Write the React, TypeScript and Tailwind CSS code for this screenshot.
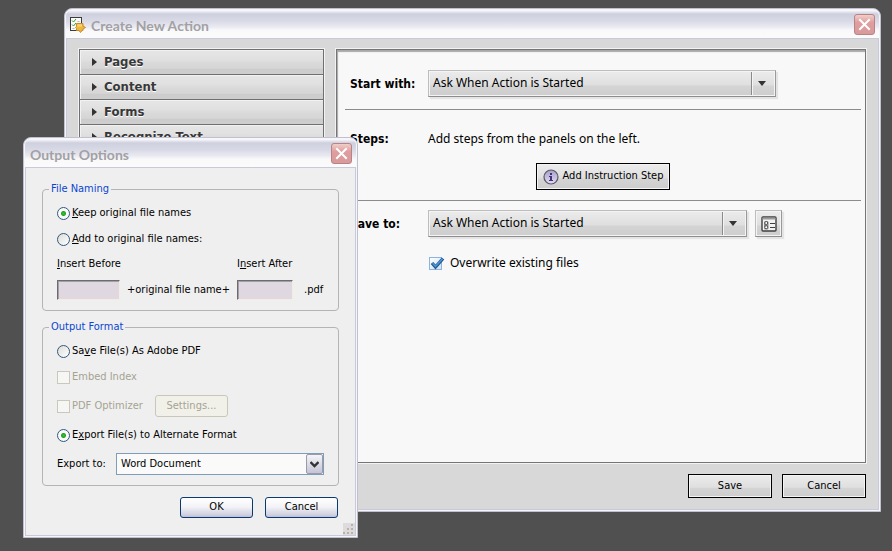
import React from 'react';

const panels = ['Pages', 'Content', 'Forms', 'Recognize Text'];

const glossy = 'bg-[linear-gradient(180deg,#ececec_0%,#e5e5e5_30%,#dfdfdf_56%,#d4d4d4_60%,#cdcdcd_100%)]';
const panelShade = 'bg-[linear-gradient(180deg,#e6e6e6_0%,#e0e0e0_40%,#d9d9d9_55%,#d6d6d6_76%,#cccccc_80%,#cecece_100%)]';

const condensed = "font-[family-name:'DejaVu_Sans_Condensed',sans-serif]";

const ActionIcon = () => (
  <svg width="16" height="16" viewBox="0 0 16 16" aria-hidden="true">
    <rect x="0.5" y="0.5" width="11" height="13" fill="#fafafa" stroke="#3c3c3c" />
    <path d="M2 3.500l1.500 1.500L6 2M2 7.500l1.500 1.500L6 6" fill="none" stroke="#3f9a3a" />
    <path d="M7.500 4.500h2M2.500 11.500h2" stroke="#b5b5b5" />
    <path d="M6.500 6.500h6.500v2.500l2.500 1.500-2.500 1.500v1.500h-1l-1.500 2-1.500-2h-2.500v-2l-1-1 1-1z" fill="#eeb73c" stroke="#c98a2a" />
    <path d="M7.500 8h4.500M7.500 9h4.500" stroke="#f8dc8e" />
  </svg>
);

const InfoIcon = () => (
  <svg width="16" height="16" viewBox="0 0 16 16" aria-hidden="true">
    <defs>
      <linearGradient id="info" x1="0" y1="0" x2="0" y2="1">
        <stop offset="0" stopColor="#a79fca" />
        <stop offset="1" stopColor="#e2def2" />
      </linearGradient>
    </defs>
    <circle cx="8" cy="8" r="7" fill="url(#info)" stroke="#5b5866" strokeWidth="1.200" />
    <path d="M7 4h2v2H7zM6 7h3v4h1v1H6v-1h1V8H6z" fill="#4a2f7c" />
  </svg>
);

const OptionsIcon = () => (
  <svg width="16" height="16" viewBox="0 0 16 16" aria-hidden="true">
    <rect x="1" y="1" width="14" height="14" rx="1" fill="#f2f2f2" stroke="#3f3f3f" strokeWidth="1.400" />
    <path d="M1.500 2.500h13" stroke="#9a9a9a" strokeWidth="2" />
    <rect x="3" y="5" width="4.500" height="8.500" rx="1.500" fill="#8a8a8a" />
    <circle cx="5.200" cy="7" r="1.500" fill="#fff" stroke="#555" />
    <circle cx="5.200" cy="11.200" r="1.500" fill="#fff" stroke="#555" />
    <path d="M9 7.500h5M9 11.500h5" stroke="#3f3f3f" />
  </svg>
);

const TitleBar = ({ title, icon }: { title: string; icon?: React.ReactNode }) => (
  <div className="flex h-7 items-center justify-between bg-[linear-gradient(180deg,#fcfcfe_0%,#cfd0df_14%,#d9dae6_40%,#e9eaf1_60%,#f9f9fb_72%,#fbfbfb_100%)] px-1 pt-px">
    <div className="flex items-center gap-1">
      {icon}
      <h1 className="pt-0.5 pl-px font-[family-name:'Lato',sans-serif] text-sm font-bold text-[#a2a1a4]">{title}</h1>
    </div>
    <button
      aria-label="Close"
      className="flex size-[21px] items-center justify-center rounded-[3px] border border-[#b98285] bg-[linear-gradient(180deg,#f0cfc8,#df9d9f_40%,#d99a9c)]"
    >
      <svg width="13" height="13" viewBox="0 0 13 13" aria-hidden="true">
        <path d="M2 2l9 9M11 2l-9 9" stroke="#fff" strokeWidth="2" strokeLinecap="square" />
      </svg>
    </button>
  </div>
);

const ActionSelect = ({ id, className }: { id: string; className: string }) => (
  <div className={`relative ${className}`}>
    <select
      id={id}
      className={`block h-[27px] w-full appearance-none border border-[#bdbdbd] border-r-[#999] border-b-[#8c8c8c] pr-7 pb-[2px] pl-1 text-xs text-black shadow-[inset_0_0_0_1px_#f4f4f4,2px_2px_1px_#e4e4e4] ${glossy}`}
    >
      <option>Ask When Action is Started</option>
    </select>
    <span className="pointer-events-none absolute inset-y-[2px] right-[1px] flex w-6 items-center justify-center border-l border-[#8a8a8a] pr-1 shadow-[inset_1px_0_0_#f4f4f4]">
      <svg width="8" height="5" viewBox="0 0 8 5" aria-hidden="true">
        <path d="M0 0h8L4 5z" fill="#333" />
      </svg>
    </span>
  </div>
);

const Radio = ({ name, checked, children }: { name: string; checked?: boolean; children: React.ReactNode }) => (
  <label className="flex h-4 items-center gap-[2px]">
    <input
      type="radio"
      name={name}
      defaultChecked={checked}
      className="size-[13px] appearance-none rounded-full border border-[#31587f] bg-[linear-gradient(135deg,#dcdcd7,#fff)] checked:bg-[radial-gradient(circle,#3cc43a_0,#22a121_2px,#fafafa_3px)]"
    />
    <span>{children}</span>
  </label>
);

const DisabledCheck = ({ label }: { label: string }) => (
  <label className="flex h-4 items-center gap-[2px] text-[#a5a392]">
    <input type="checkbox" disabled className="size-[13px] appearance-none border border-[#cac8bb] bg-[#f6f6f4]" />
    <span>{label}</span>
  </label>
);

const ActionWindow = () => (
  <section className="absolute top-2 right-[11px] bottom-[39px] left-16 flex flex-col rounded-t-lg border border-[#c0c0cf] bg-[#f6f6fa] p-px">
    <div className="overflow-hidden rounded-t-md">
      <TitleBar title="Create New Action" icon={<ActionIcon />} />
    </div>
    <div className="flex min-h-0 flex-1 flex-col border border-[#c9c9dc] bg-[#d8d8d8] px-3 pt-2.5 pb-[11px]">
      <div className="flex min-h-0 flex-1 gap-3">
        <div className="w-[245px] shrink-0 border border-[#6f6f6f] shadow-[0_0_0_1px_#f2f2f2]">
          {panels.map((panel) => (
            <button
              key={panel}
              className={`flex h-[25px] w-full items-center gap-[7px] border-b border-[#6f6f6f] pl-3 text-[13px] font-bold text-[#383838] shadow-[inset_1px_1px_0_#f2f2f2] [text-shadow:0_1px_0_#fff] ${condensed} ${panelShade}`}
            >
              <svg width="5" height="8" viewBox="0 0 5 8" aria-hidden="true">
                <path d="M0 0l5 4-5 4z" fill="#333" />
              </svg>
              {panel}
            </button>
          ))}
        </div>
        <div className="min-w-0 flex-1 border border-[#757575] bg-[#f8f8f8] pr-1 pl-2 text-xs text-black shadow-[inset_1px_2px_1px_#a8a8a8,0_0_0_1px_#f2f2f2]">
          <div className="flex items-center border-b border-[#8c8c8c] pt-5 pb-3 pl-[5px]">
            <label htmlFor="start-with" className={`w-[78px] font-bold ${condensed}`}>
              Start with:
            </label>
            <ActionSelect id="start-with" className="w-[348px]" />
          </div>
          <div className="border-b border-[#8c8c8c] pt-5 pb-2.5">
            <div className="flex h-[18px] items-center pl-[5px]">
              <span className={`w-[78px] font-bold ${condensed}`}>Steps:</span>
              <span>Add steps from the panels on the left.</span>
            </div>
            <div className="mt-[15px] flex justify-center">
              <button
                className={`flex h-[27px] items-center gap-1 border border-black px-[6px] text-[11px] shadow-[inset_0_0_0_1px_#f4f4f4] ${condensed} ${glossy}`}
              >
                <InfoIcon />
                Add Instruction Step
              </button>
            </div>
          </div>
          <div className="flex items-center pt-[9px] pl-[5px]">
            <label htmlFor="save-to" className={`w-[78px] font-bold ${condensed}`}>
              Save to:
            </label>
            <ActionSelect id="save-to" className="w-[319px]" />
            <button
              aria-label="Output options"
              className={`ml-2 flex h-[27px] w-[27px] items-center justify-center border border-[#bdbdbd] border-r-[#999] border-b-[#8c8c8c] shadow-[inset_0_0_0_1px_#f4f4f4,2px_2px_1px_#e4e4e4] ${glossy}`}
            >
              <OptionsIcon />
            </button>
          </div>
          <label className="mt-[18px] ml-[84px] flex h-4 items-center gap-2">
            <span className="relative">
              <input
                type="checkbox"
                defaultChecked
                className="block size-[13px] appearance-none border border-[#8db4de] bg-[linear-gradient(135deg,#fff,#cfe0f4)]"
              />
              <svg className="pointer-events-none absolute -top-px left-px" width="15" height="14" viewBox="0 0 15 14" aria-hidden="true">
                <path d="M2 7l3.500 4L13 2.500" fill="none" stroke="#24588f" strokeWidth="3.400" />
                <path d="M2.500 7.200l3 3.200L12.500 2.700" fill="none" stroke="#4a93d4" strokeWidth="1.600" />
              </svg>
            </span>
            Overwrite existing files
          </label>
        </div>
      </div>
      <div className={`mt-[11px] flex justify-end gap-2.5 text-[11px] ${condensed}`}>
        <button className={`h-6 w-[84px] border border-black shadow-[inset_0_0_0_1px_#f4f4f4] ${glossy}`}>Save</button>
        <button className={`h-6 w-[84px] border border-black shadow-[inset_0_0_0_1px_#f4f4f4] ${glossy}`}>Cancel</button>
      </div>
    </div>
  </section>
);

const xpButton =
  'h-[21px] w-[73px] rounded-[3px] border border-[#0a3a70] bg-[linear-gradient(180deg,#fff_0%,#f4f4f8_45%,#cfcfe0_90%,#bdbdd4_100%)]';

const sunken = 'h-5 border border-[#6d6a70] border-r-[#f4ece0] border-b-[#f4ece0] bg-[#e0d8e0] shadow-[inset_1px_1px_0_#a5a0a5]';

const OutputDialog = () => (
  <section
    className={`absolute top-[137px] left-[23px] w-[335px] rounded-t-lg border border-[#c0c0cf] bg-[#f6f6fa] p-px text-[11px] text-black ${condensed}`}
  >
    <div className="overflow-hidden rounded-t-md">
      <TitleBar title="Output Options" />
    </div>
    <form className="relative border border-[#c9c9dc] bg-[#efefef] px-4 pt-[13px] pb-[17px]">
      <fieldset className="rounded-[4px] border border-[#b4b4b4] px-3.5 pb-2.5">
        <legend className="-ml-2 h-4 px-[2px] leading-4 text-[#0a46d2]">File Naming</legend>
        <div className="flex flex-col gap-2.5 pt-2">
          <Radio name="naming" checked>
            <u>K</u>eep original file names
          </Radio>
          <Radio name="naming">
            <u>A</u>dd to original file names:
          </Radio>
        </div>
        <div className="mt-[9px] grid grid-cols-[63px_117px_56px_1fr] items-center gap-y-2 leading-4">
          <label htmlFor="before" className="col-span-2">
            <u>I</u>nsert Before
          </label>
          <label htmlFor="after" className="col-span-2">
            I<u>n</u>sert After
          </label>
          <input id="before" className={sunken} />
          <span className="text-center whitespace-nowrap">+original file name+</span>
          <input id="after" className={sunken} />
          <span className="pl-[11px]">.pdf</span>
        </div>
      </fieldset>
      <fieldset className="mt-2 rounded-[4px] border border-[#b4b4b4] px-3.5 pb-2.5">
        <legend className="-ml-2 h-4 px-[2px] leading-4 text-[#0a46d2]">Output Format</legend>
        <div className="flex flex-col gap-2.5 pt-2">
          <Radio name="format">
            Sa<u>v</u>e File(s) As Adobe PDF
          </Radio>
          <DisabledCheck label="Embed Index" />
          <div className="flex items-center">
            <div className="w-[98px]">
              <DisabledCheck label="PDF Optimizer" />
            </div>
            <button type="button" disabled className="h-[22px] w-[73px] rounded-[3px] border border-[#c9c7ba] bg-[#f1f1ea] text-[#a5a392]">
              Settings...
            </button>
          </div>
          <Radio name="format" checked>
            E<u>x</u>port File(s) to Alternate Format
          </Radio>
          <div className="flex items-center">
            <label htmlFor="export-to" className="w-[59px]">
              Export to:
            </label>
            <div className="relative w-[208px]">
              <select id="export-to" className="block h-[22px] w-full appearance-none border border-[#7f9db9] bg-[#fafafa] pr-5 pl-1">
                <option>Word Document</option>
              </select>
              <span className="pointer-events-none absolute inset-y-px right-px flex w-[17px] items-center justify-center rounded-[2px] border border-[#9a9aab] bg-[linear-gradient(180deg,#f4f4f8,#c4c4d6)]">
                <svg width="9" height="7" viewBox="0 0 9 7" aria-hidden="true">
                  <path d="M0.500 1l4 4 4-4" fill="none" stroke="#333" strokeWidth="2.400" />
                </svg>
              </span>
            </div>
          </div>
        </div>
      </fieldset>
      <div className="mt-[11px] flex justify-end gap-3 pr-px">
        <button type="button" className={xpButton}>OK</button>
        <button type="button" className={xpButton}>Cancel</button>
      </div>
      <svg className="absolute right-0 bottom-0" width="12" height="12" viewBox="0 0 12 12" aria-hidden="true">
        <path d="M0 0h12v12H0z" fill="#dedade" />
        <path d="M8 1h2v2H8zM4 5h2v2H4zM8 5h2v2H8zM0 9h2v2H0zM4 9h2v2H4zM8 9h2v2H8z" fill="#b8b4a2" />
      </svg>
    </form>
  </section>
);

const App: React.FC = () => (
  <main className="relative h-screen overflow-hidden bg-[#505050] font-[family-name:'Noto_Sans',sans-serif]">
    <ActionWindow />
    <OutputDialog />
  </main>
);

export default App;
